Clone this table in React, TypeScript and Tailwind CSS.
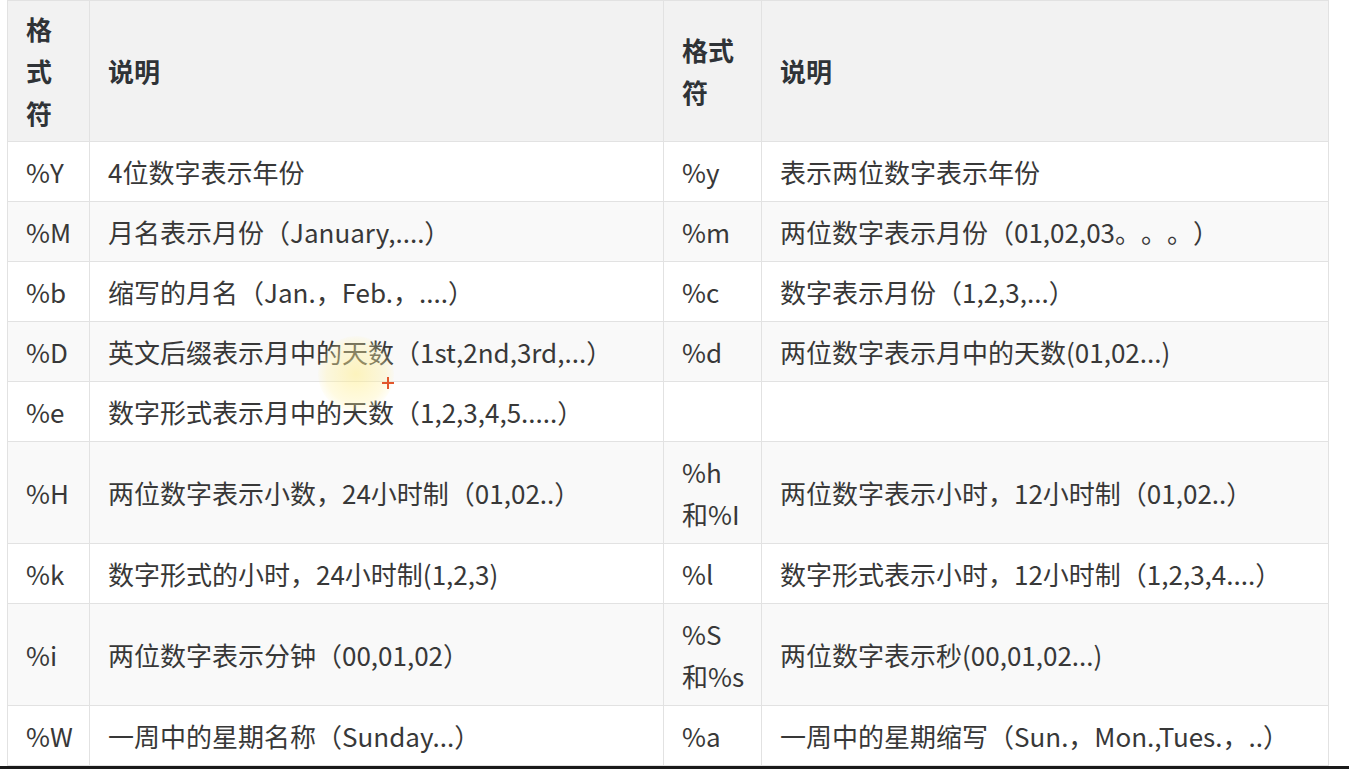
const ROWS: { a: string[]; b: string; c: string[]; d: string }[] = [
  { a: ['%Y'], b: '4位数字表示年份', c: ['%y'], d: '表示两位数字表示年份' },
  { a: ['%M'], b: '月名表示月份（January,....）', c: ['%m'], d: '两位数字表示月份（01,02,03。。。）' },
  { a: ['%b'], b: '缩写的月名（Jan.，Feb.，....）', c: ['%c'], d: '数字表示月份（1,2,3,...）' },
  { a: ['%D'], b: '英文后缀表示月中的天数（1st,2nd,3rd,...）', c: ['%d'], d: '两位数字表示月中的天数(01,02...)' },
  { a: ['%e'], b: '数字形式表示月中的天数（1,2,3,4,5.....）', c: [], d: '' },
  { a: ['%H'], b: '两位数字表示小数，24小时制（01,02..）', c: ['%h', '和%I'], d: '两位数字表示小时，12小时制（01,02..）' },
  { a: ['%k'], b: '数字形式的小时，24小时制(1,2,3)', c: ['%l'], d: '数字形式表示小时，12小时制（1,2,3,4....）' },
  { a: ['%i'], b: '两位数字表示分钟（00,01,02）', c: ['%S', '和%s'], d: '两位数字表示秒(00,01,02...)' },
  { a: ['%W'], b: '一周中的星期名称（Sunday...）', c: ['%a'], d: '一周中的星期缩写（Sun.，Mon.,Tues.，..）' },
];

const cell = 'border border-[#e2e2e2] px-[18px] pt-[9px] pb-[8px] align-middle';
const head = 'border border-[#e2e2e2] px-[18px] pt-[7px] pb-[7px] align-middle font-bold';

function Lines({ items }: { items: string[] }) {
  return (
    <>
      {items.map((t, i) => (
        <div key={i}>{t}</div>
      ))}
    </>
  );
}

export default function App() {
  return (
    <div
      className="relative h-[769px] w-[1349px] overflow-hidden bg-white text-[#383838] [text-spacing-trim:space-all]"
      style={{ fontFamily: '"Noto Sans CJK SC", "Noto Sans", sans-serif' }}
    >
      <div className="pl-[7px]">
        <table className="w-[1321px] table-fixed border-collapse text-[26px] leading-[42px]">
          <colgroup>
            <col className="w-[82px]" />
            <col className="w-[574px]" />
            <col className="w-[98px]" />
            <col className="w-[567px]" />
          </colgroup>
          <thead>
            <tr className="bg-[#f2f2f2] text-left text-[#2f3337]">
              <th className={head}>
                <Lines items={['格', '式', '符']} />
              </th>
              <th className={head}>说明</th>
              <th className={head}>
                <Lines items={['格式', '符']} />
              </th>
              <th className={head}>说明</th>
            </tr>
          </thead>
          <tbody>
            {ROWS.map((r, i) => (
              <tr key={i} className={i % 2 === 1 ? 'bg-[#f9f9f9]' : 'bg-white'}>
                <td className={cell}>
                  <Lines items={r.a} />
                </td>
                <td className={`${cell} whitespace-nowrap`}>{r.b}</td>
                <td className={cell}>
                  <Lines items={r.c} />
                </td>
                <td className={`${cell} whitespace-nowrap`}>{r.d}</td>
              </tr>
            ))}
          </tbody>
        </table>
      </div>

      {/* cursor highlight */}
      <div className="pointer-events-none absolute left-[318px] top-[336px] h-[76px] w-[76px] rounded-full bg-[radial-gradient(circle,rgba(255,238,140,0.55)_0%,rgba(255,242,170,0.35)_55%,rgba(255,250,210,0)_75%)]" />
      <div className="pointer-events-none absolute left-[382px] top-[377px] h-[12px] w-[12px]">
        <div className="absolute left-[5px] top-0 h-[12px] w-[2px] bg-[#e2572c]" />
        <div className="absolute left-0 top-[5px] h-[2px] w-[12px] bg-[#e2572c]" />
      </div>

      {/* screen edge */}
      <div className="absolute bottom-0 left-0 h-[3px] w-full bg-[#1a1a1a]" />
    </div>
  );
}
